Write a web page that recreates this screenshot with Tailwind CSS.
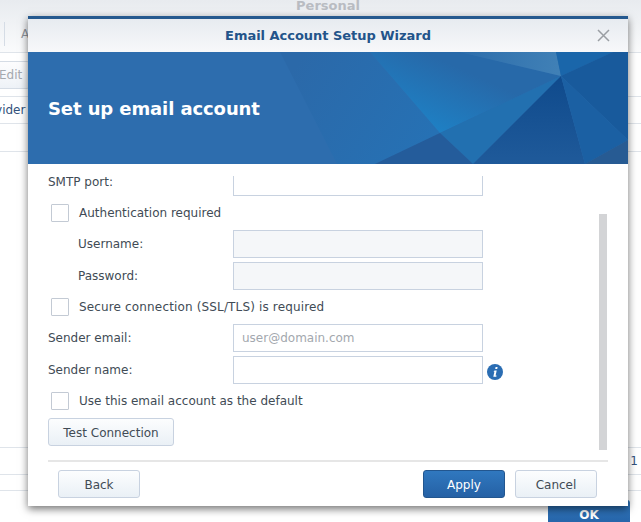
<!DOCTYPE html>
<html>
<head>
<meta charset="utf-8">
<script src="https://cdn.jsdelivr.net/npm/@tailwindcss/browser@4"></script>
</head>
<body class="m-0 bg-white">
<div class="relative w-[641px] h-[522px] overflow-hidden bg-white font-['DejaVu_Sans',Verdana,sans-serif] text-[12px] text-[#414b55]">

  <!-- page behind the dialog -->
  <div class="flex flex-col w-full h-full">
    <div class="h-[53px] shrink-0 bg-gradient-to-b from-[#e8ebef] to-[#fafbfc] border-b border-[#dfe4ea] flex flex-col">
      <div class="h-[12px] leading-[11px] text-center pl-[15px] font-bold text-[13px] text-[#b9bcc2]">Personal</div>
      <div class="flex items-center h-[24px] mt-[10px]">
        <div class="w-[1px] h-[24px] ml-[4px] bg-[#d5dce5]"></div>
        <div class="ml-[16px] text-[#8f949b]">A</div>
      </div>
    </div>
    <div class="h-[44px] shrink-0 border-b border-[#dfe4ea] pt-[8px]">
      <div class="w-[40px] h-[28px] -ml-[10px] pl-[8px] leading-[26px] border border-[#d5dce5] rounded-[3px] bg-gradient-to-b from-[#fdfdfe] to-[#eef2f7] text-[#a5a9af]">Edit</div>
    </div>
    <div class="h-[27px] shrink-0 border-b border-[#dfe4ea] leading-[26px] text-[#33527c] whitespace-nowrap -ml-[24px]">Provider</div>
    <div class="h-[28px] shrink-0 border-b border-[#dfe4ea]"></div>
    <div class="h-[296px] shrink-0 border-b border-[#dfe4ea]"></div>
    <div class="h-[27px] shrink-0 border-b border-[#dfe4ea] text-right pr-[3px] leading-[26px] text-[#33527c]">1</div>
    <div class="h-[16px] shrink-0 border-b border-[#dfe4ea]"></div>
    <div class="flex justify-end pr-[11px] pt-[9px]">
      <div class="w-[82px] h-[28px] rounded-[3px] bg-gradient-to-b from-[#3078bf] to-[#2561a5] text-white text-center leading-[30px] font-bold">OK</div>
    </div>
  </div>

  <!-- dialog -->
  <div class="absolute left-[28px] top-[16px] w-[600px] h-[490px] bg-white border-t-[3px] border-[#25598f] shadow-[0_3px_8px_rgba(0,0,0,0.55)] flex flex-col">
    <div class="relative h-[33px] shrink-0 bg-gradient-to-b from-[#e7ebf0] to-[#f7f8fa] flex items-center justify-center">
      <span class="font-bold text-[13px] tracking-[-0.03px] text-[#23548a]">Email Account Setup Wizard</span>
      <svg class="absolute right-[18px] top-[10px]" width="13" height="13" viewBox="0 0 13 13" fill="none" stroke="#9a9ea3" stroke-width="1.5"><path d="M1 1 L12 12 M12 1 L1 12"/></svg>
    </div>

    <div class="relative h-[112px] shrink-0 bg-[#2d6dae] flex items-center pl-[20px]">
      <svg class="absolute left-0 top-0" width="600" height="112" viewBox="0 0 600 112">
        <defs>
          <linearGradient id="a" gradientUnits="userSpaceOnUse" x1="440" y1="20" x2="412" y2="81"><stop offset="0" stop-color="#2769a9"/><stop offset="1" stop-color="#1e80c4"/></linearGradient>
          <linearGradient id="b" gradientUnits="userSpaceOnUse" x1="270" y1="10" x2="400" y2="90"><stop offset="0" stop-color="#2b69a9"/><stop offset="1" stop-color="#2671b4"/></linearGradient>
          <linearGradient id="c" x1="0" y1="0" x2="0" y2="1"><stop offset="0" stop-color="#0f4a8c"/><stop offset="1" stop-color="#1f5a9a"/></linearGradient>
          <linearGradient id="d" gradientUnits="userSpaceOnUse" x1="432" y1="0" x2="530" y2="10"><stop offset="0" stop-color="#2c6dab"/><stop offset="1" stop-color="#4080b6"/></linearGradient>
        </defs>
        <polygon points="252,0 342,0 412,81 347,112 309,112" fill="url(#b)"/>
        <polygon points="342,0 432,0 533,24 412,81" fill="url(#a)"/>
        <polygon points="432,0 528,0 533,24" fill="url(#d)"/>
        <polygon points="528,0 585,0 533,24" fill="#1a66aa"/>
        <polygon points="585,0 600,0 600,88 533,24" fill="#185a9c"/>
        <polygon points="533,24 412,81 445,112" fill="#2270b0"/>
        <polygon points="412,81 445,112 347,112" fill="#245c9b"/>
        <polygon points="533,24 445,112 557,112" fill="url(#c)"/>
        <polygon points="533,24 557,112 600,88" fill="#1b60a3"/>
        <polygon points="557,112 600,88 600,112" fill="#275b93"/>
      </svg>
      <span class="relative font-bold text-[18px] tracking-[-0.1px] text-white">Set up email account</span>
    </div>

    <div class="relative flex-1 pl-[20px] pr-[20px] flex flex-col">
      <!-- scrollbar -->
      <div class="absolute left-[571px] top-[50px] w-[8px] h-[236px] bg-[#d3d4d6]"></div>

      <div class="flex h-[32px] pt-[12px]">
        <div class="w-[185px] leading-[12px]">SMTP port:</div>
        <div class="w-[250px] h-[20px] border border-t-0 border-[#c8d2e0] bg-white"></div>
      </div>

      <div class="flex items-center h-[18px] mt-[8px] pl-[3px]">
        <div class="w-[18px] h-[18px] border border-[#c3cad4] bg-white rounded-[1px]"></div>
        <span class="ml-[10px]">Authentication required</span>
      </div>

      <div class="flex items-center h-[28px] mt-[8px]">
        <div class="w-[185px] pl-[30px]">Username:</div>
        <div class="w-[250px] h-[28px] border border-[#c8d2e0] bg-[#f5f7f9]"></div>
      </div>
      <div class="flex items-center h-[28px] mt-[4px]">
        <div class="w-[185px] pl-[30px]">Password:</div>
        <div class="w-[250px] h-[28px] border border-[#c8d2e0] bg-[#f5f7f9]"></div>
      </div>

      <div class="flex items-center h-[18px] mt-[8px] pl-[3px]">
        <div class="w-[18px] h-[18px] border border-[#c3cad4] bg-white rounded-[1px]"></div>
        <span class="ml-[10px] tracking-[0.15px]">Secure connection (SSL/TLS) is required</span>
      </div>

      <div class="flex items-center h-[28px] mt-[8px]">
        <div class="w-[185px]">Sender email:</div>
        <div class="w-[250px] h-[28px] border border-[#c8d2e0] bg-white pl-[8px] leading-[26px] text-[#a3a8ae]">user@domain.com</div>
      </div>
      <div class="flex items-center h-[28px] mt-[4px]">
        <div class="w-[185px]">Sender name:</div>
        <div class="w-[250px] h-[28px] border border-[#c8d2e0] bg-white"></div>
        <svg class="ml-[4px] mt-[4px]" width="16" height="16" viewBox="0 0 16 16">
          <circle cx="8" cy="8" r="8" fill="#2a6db3"/>
          <path d="M8.6 3 h2 l-.4 2 h-2 z M7.5 6.5 h2.2 l-1.1 5 h1 l-.3 1.3 h-3 l1.1 -5 h-.9 z" fill="#fff"/>
        </svg>
      </div>

      <div class="flex items-center h-[18px] mt-[8px] pl-[3px]">
        <div class="w-[18px] h-[18px] border border-[#c3cad4] bg-white rounded-[1px]"></div>
        <span class="ml-[10px]">Use this email account as the default</span>
      </div>

      <button class="w-[126px] h-[28px] mt-[8px] pt-[2px] rounded-[3px] border border-[#c8d2e0] bg-gradient-to-b from-[#fcfdfe] to-[#eaf0f6] text-[#414b55] text-center">Test Connection</button>

      <div class="h-[2px] mt-[14px] bg-[#e6e6e6]"></div>

      <div class="flex justify-between h-[28px] mt-[8px] px-[10px] mr-[1px]">
        <button class="w-[82px] h-[28px] pt-[2px] rounded-[3px] border border-[#c8d2e0] bg-gradient-to-b from-[#fcfdfe] to-[#eaf0f6] text-[#414b55]">Back</button>
        <div class="flex gap-[10px]">
          <button class="w-[82px] h-[28px] pt-[2px] rounded-[3px] border border-[#22568f] bg-gradient-to-b from-[#3078bf] to-[#2561a5] text-white">Apply</button>
          <button class="w-[82px] h-[28px] pt-[2px] rounded-[3px] border border-[#c8d2e0] bg-gradient-to-b from-[#fcfdfe] to-[#eaf0f6] text-[#414b55]">Cancel</button>
        </div>
      </div>
    </div>
  </div>
</div>
</body>
</html>
